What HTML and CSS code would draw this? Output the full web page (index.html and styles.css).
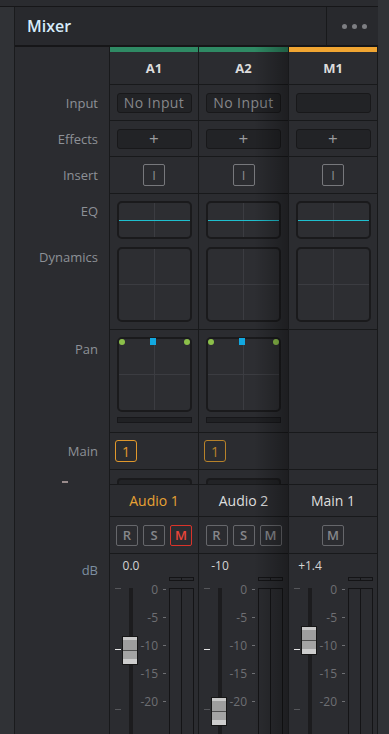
FILE: index.html
```html
<!DOCTYPE html>
<html>
<head>
  <title>Mixer</title>
  <link rel="stylesheet" href="styles.css">
</head>
<body>
  <div class="app">
    <div class="workspace">
      <div class="topbar"></div>
      <div class="workspace-body">
        <div class="sidebar"></div>
        <div class="mixer">
          <div class="mixer-head">
            <div class="mixer-title">Mixer</div>
            <div class="mixer-menu"><span></span><span></span><span></span></div>
          </div>
          <div class="mixer-body">

            <div class="labels">
              <div class="row row-bar"></div>
              <div class="row row-head"></div>
              <div class="row row-input">Input</div>
              <div class="row row-fx">Effects</div>
              <div class="row row-insert">Insert</div>
              <div class="row row-eq">
                <span class="label-eq">EQ</span>
                <span class="label-dyn">Dynamics</span>
              </div>
              <div class="row row-pan"><span class="label-pan">Pan</span></div>
              <div class="row row-main">Main</div>
              <div class="row row-stub"><span class="stub-mark"></span></div>
              <div class="row row-name"></div>
              <div class="row row-rsm"></div>
              <div class="row row-fader"><span class="label-db">dB</span></div>
            </div>

            <div class="channel">
              <div class="row row-bar bar-green"></div>
              <div class="row row-head">A1</div>
              <div class="row row-input"><div class="slot">No Input</div></div>
              <div class="row row-fx"><div class="slot plus">+</div></div>
              <div class="row row-insert"><div class="btn-insert">I</div></div>
              <div class="row row-eq">
                <div class="graph eq"></div>
                <div class="graph dyn"></div>
              </div>
              <div class="row row-pan">
                <div class="graph pan">
                  <span class="pan-dot left"></span>
                  <span class="pan-pos"></span>
                  <span class="pan-dot right"></span>
                </div>
                <div class="pan-bar"></div>
              </div>
              <div class="row row-main"><div class="bus-btn">1</div></div>
              <div class="row row-stub"><div class="stub"></div></div>
              <div class="row row-name name-active">Audio 1</div>
              <div class="row row-rsm">
                <div class="tog">R</div><div class="tog">S</div><div class="tog mute-on">M</div>
              </div>
              <div class="row row-fader">
                <div class="fader-value">0.0</div>
                <div class="fader-body">
                  <div class="fader">
                    <div class="ticks"><span></span><span class="unity"></span><span></span></div>
                    <div class="track"></div>
                    <div class="knob" style="top: 59px"></div>
                  </div>
                  <div class="scale"><span>0</span><span>-5</span><span>-10</span><span>-15</span><span>-20</span></div>
                  <div class="meter">
                    <div class="peak"><span></span><span></span></div>
                    <div class="meter-bars"><span></span><span></span></div>
                  </div>
                </div>
              </div>
            </div>

            <div class="channel wide shaded">
              <div class="row row-bar bar-green"></div>
              <div class="row row-head">A2</div>
              <div class="row row-input"><div class="slot">No Input</div></div>
              <div class="row row-fx"><div class="slot plus">+</div></div>
              <div class="row row-insert"><div class="btn-insert">I</div></div>
              <div class="row row-eq">
                <div class="graph eq"></div>
                <div class="graph dyn"></div>
              </div>
              <div class="row row-pan">
                <div class="graph pan">
                  <span class="pan-dot left"></span>
                  <span class="pan-pos"></span>
                  <span class="pan-dot right"></span>
                </div>
                <div class="pan-bar"></div>
              </div>
              <div class="row row-main"><div class="bus-btn dim">1</div></div>
              <div class="row row-stub"><div class="stub"></div></div>
              <div class="row row-name">Audio 2</div>
              <div class="row row-rsm">
                <div class="tog">R</div><div class="tog">S</div><div class="tog">M</div>
              </div>
              <div class="row row-fader">
                <div class="fader-value">-10</div>
                <div class="fader-body">
                  <div class="fader">
                    <div class="ticks"><span></span><span class="unity"></span><span></span></div>
                    <div class="track"></div>
                    <div class="knob" style="top: 120px"></div>
                  </div>
                  <div class="scale"><span>0</span><span>-5</span><span>-10</span><span>-15</span><span>-20</span></div>
                  <div class="meter">
                    <div class="peak"><span></span><span></span></div>
                    <div class="meter-bars"><span></span><span></span></div>
                  </div>
                </div>
              </div>
            </div>

            <div class="channel">
              <div class="row row-bar bar-orange"></div>
              <div class="row row-head">M1</div>
              <div class="row row-input"><div class="slot"></div></div>
              <div class="row row-fx"><div class="slot plus">+</div></div>
              <div class="row row-insert"><div class="btn-insert">I</div></div>
              <div class="row row-eq">
                <div class="graph eq"></div>
                <div class="graph dyn"></div>
              </div>
              <div class="row row-pan"></div>
              <div class="row row-main"></div>
              <div class="row row-stub"></div>
              <div class="row row-name">Main 1</div>
              <div class="row row-rsm">
                <div class="tog">M</div>
              </div>
              <div class="row row-fader">
                <div class="fader-value">+1.4</div>
                <div class="fader-body">
                  <div class="fader">
                    <div class="ticks"><span></span><span class="unity"></span><span></span></div>
                    <div class="track"></div>
                    <div class="knob" style="top: 49px"></div>
                  </div>
                  <div class="scale"><span>0</span><span>-5</span><span>-10</span><span>-15</span><span>-20</span></div>
                  <div class="meter">
                    <div class="peak"><span></span><span></span></div>
                    <div class="meter-bars"><span></span><span></span></div>
                  </div>
                </div>
              </div>
            </div>

          </div>
        </div>
      </div>
    </div>
    <div class="rightbar"></div>
  </div>
</body>
</html>
```

FILE: styles.css
```css
* {
  box-sizing: border-box;
}

body {
  margin: 0;
  background-color: #303236;
  font-family: "Open Sans", "DejaVu Sans", sans-serif;
  height: 734px;
  overflow: hidden;
}

.app {
  display: flex;
  height: 734px;
}

.workspace {
  width: 378px;
  display: flex;
  flex-direction: column;
}

.topbar {
  height: 7px;
  background-color: #2a2b2f;
  border-bottom: 1px solid #161618;
}

.workspace-body {
  flex: 1;
  display: flex;
  min-height: 0;
}

.sidebar {
  width: 15px;
  background-color: #303236;
  border-right: 1px solid #1a1b1d;
}

.rightbar {
  flex: 1;
  background-color: #303236;
}

.mixer {
  flex: 1;
  display: flex;
  flex-direction: column;
  background-color: #2b2c30;
}

.mixer-head {
  height: 40px;
  display: flex;
  background-color: #28292d;
  border-bottom: 2px solid #161618;
}

.mixer-title {
  flex: 1;
  display: flex;
  align-items: center;
  padding-left: 12px;
  font-size: 16px;
  font-weight: 600;
  color: #d6ecfb;
}

.mixer-menu {
  width: 52px;
  display: flex;
  align-items: center;
  justify-content: center;
  gap: 5px;
  padding-left: 3px;
  border-left: 1px solid #18191b;
}

.mixer-menu span {
  width: 5px;
  height: 5px;
  border-radius: 50%;
  background-color: #7d7e82;
}

.mixer-body {
  flex: 1;
  display: flex;
  min-height: 0;
}

/* rows shared by label column and channels */
.row {
  border-bottom: 1px solid #18191b;
  display: flex;
  align-items: center;
  justify-content: center;
}

.row-bar { height: 5px; border-bottom: 0; }
.row-head { height: 33px; }
.row-input { height: 36px; }
.row-fx { height: 36px; }
.row-insert { height: 37px; }
.row-eq { height: 136px; }
.row-pan { height: 103px; }
.row-main { height: 37px; }
.row-stub { height: 15px; }
.row-name { height: 32px; }
.row-rsm { height: 37px; }
.row-fader {
  flex: 1;
  border-bottom: 0;
  display: block;
  overflow: hidden;
}

/* label column */
.labels {
  width: 95px;
  display: flex;
  flex-direction: column;
  border-right: 1px solid #18191b;
}

.labels .row {
  border-bottom-color: transparent;
  justify-content: flex-end;
  padding-right: 11px;
  font-size: 13px;
  color: #8d9197;
}

.labels .row-eq,
.labels .row-pan {
  flex-direction: column;
  align-items: flex-end;
  justify-content: flex-start;
}

.label-eq {
  margin-top: 8px;
  line-height: 18px;
}

.label-dyn {
  margin-top: 28px;
  line-height: 18px;
}

.label-pan {
  margin-top: 10px;
  line-height: 18px;
}

.labels .row-stub {
  align-items: flex-end;
  justify-content: flex-start;
  padding-left: 47px;
}

.stub-mark {
  width: 6px;
  height: 2px;
  margin-bottom: 1px;
  background-color: #9a8c8c;
}

.labels .row-fader {
  display: flex;
  align-items: flex-start;
  padding-top: 7px;
  color: #7d8fa0;
}

.label-db {
  line-height: 18px;
}

/* channel strips */
.channel {
  width: 89px;
  display: flex;
  flex-direction: column;
  position: relative;
  border-right: 1px solid #18191b;
}

.channel.wide {
  width: 90px;
}

.channel.shaded:after {
  content: "";
  position: absolute;
  top: 0;
  left: 0;
  right: 0;
  bottom: 0;
  background: linear-gradient(to right, rgba(0, 0, 0, 0) 62%, rgba(0, 0, 0, 0.32) 100%);
  pointer-events: none;
}

.bar-green { background-color: #2f8a64; }
.bar-orange { background-color: #f0a532; }

.channel .row-head {
  font-size: 13px;
  font-weight: 700;
  color: #dcdcdc;
}

.slot {
  width: 75px;
  height: 20px;
  display: flex;
  align-items: center;
  justify-content: center;
  background-color: #222326;
  border: 1px solid #18181a;
  border-radius: 3px;
  font-size: 14px;
  letter-spacing: 0.4px;
  color: #86878a;
}

.slot.plus {
  font-size: 17px;
  color: #9a9b9e;
}

.btn-insert {
  width: 22px;
  height: 22px;
  display: flex;
  align-items: center;
  justify-content: center;
  border: 1px solid #77787c;
  border-radius: 2px;
  font-size: 13px;
  color: #8a8b8f;
}

.channel .row-eq,
.channel .row-pan {
  flex-direction: column;
  justify-content: flex-start;
  padding-top: 7px;
}

.channel .row-eq {
  gap: 8px;
}

.channel .row-pan {
  gap: 5px;
}

.graph {
  width: 75px;
  position: relative;
  border: 2px solid #1a1a1c;
  border-radius: 5px;
  background:
    linear-gradient(#3b3c41, #3b3c41) center / 1px 100% no-repeat,
    linear-gradient(#3b3c41, #3b3c41) center / 100% 1px no-repeat,
    #2d2e32;
}

.graph.eq {
  height: 38px;
  background:
    linear-gradient(#1fc0cf, #1fc0cf) center / 100% 1px no-repeat,
    linear-gradient(#3b3c41, #3b3c41) center / 1px 100% no-repeat,
    #2d2e32;
}

.graph.dyn,
.graph.pan {
  height: 75px;
}

.pan-dot {
  position: absolute;
  top: 0;
  width: 6px;
  height: 6px;
  border-radius: 50%;
  background-color: #8cc04a;
}

.pan-dot.left { left: 0; }
.pan-dot.right { right: 0; }

.pan-pos {
  position: absolute;
  top: -1px;
  left: 31px;
  width: 6px;
  height: 7px;
  background-color: #12a8e0;
}

.pan-bar {
  width: 75px;
  height: 6px;
  background-color: #202124;
  border: 1px solid #17171a;
}

.channel .row-main {
  justify-content: flex-start;
  padding-left: 5px;
}

.bus-btn {
  width: 22px;
  height: 22px;
  display: flex;
  align-items: center;
  justify-content: center;
  border: 1px solid #e0982c;
  border-radius: 3px;
  font-size: 14px;
  color: #e0982c;
}

.bus-btn.dim {
  border-color: #b7822a;
  color: #b7822a;
}

.channel .row-stub {
  align-items: flex-start;
  padding-top: 8px;
  overflow: hidden;
}

.stub {
  width: 75px;
  height: 12px;
  flex-shrink: 0;
  background-color: #222326;
  border: 2px solid #1a1a1c;
  border-radius: 4px;
}

.channel .row-name {
  font-size: 14px;
  color: #dedede;
}

.channel .row-name.name-active {
  color: #e8a234;
}

.channel .row-rsm {
  gap: 5px;
}

.tog {
  width: 22px;
  height: 21px;
  display: flex;
  align-items: center;
  justify-content: center;
  border: 1.5px solid #66676b;
  border-radius: 2px;
  font-size: 13px;
  font-weight: 600;
  color: #86878b;
}

.tog.mute-on {
  border-color: #d9342b;
  color: #e8453a;
}

/* fader section */
.fader-value {
  width: 42px;
  height: 23px;
  padding-top: 4px;
  line-height: 16px;
  text-align: center;
  font-size: 12px;
  color: #d4d4d4;
}

.fader-body {
  display: flex;
  height: 160px;
}

.fader {
  width: 28px;
  display: flex;
  position: relative;
  padding-left: 5px;
}

.ticks {
  width: 6px;
  margin-right: 8px;
  display: flex;
  flex-direction: column;
}

.ticks span {
  height: 1px;
  margin-top: 59px;
  background-color: #55565a;
}

.ticks span:first-child {
  margin-top: 11px;
}

.ticks span.unity {
  margin-top: 60px;
  background-color: #e6e6e6;
}

.track {
  width: 4px;
  margin-top: 11px;
  background-color: #1c1c1e;
}

.knob {
  position: absolute;
  left: 12px;
  width: 16px;
  height: 29px;
  border: 1px solid #161616;
  background: linear-gradient(#c9c9c9 0, #c9c9c9 3px, #9e9e9e 3px, #9e9e9e 13px, #4e4e4e 13px, #4e4e4e 14px, #a4a4a4 14px, #a4a4a4 22px, #cdcdcd 22px);
}

.scale {
  width: 29px;
  padding-top: 5px;
  padding-right: 1px;
  display: flex;
  flex-direction: column;
  gap: 14px;
}

.scale span {
  display: flex;
  align-items: center;
  justify-content: flex-end;
  height: 14px;
  font-size: 12px;
  color: #6e6f73;
}

.scale span:after {
  content: "";
  width: 3px;
  height: 1px;
  margin-left: 5px;
  background-color: #6e6f73;
}

.meter {
  width: 25px;
  margin-left: 2px;
  display: flex;
  flex-direction: column;
}

.peak,
.meter-bars {
  display: flex;
  border: 1px solid #141416;
}

.peak {
  height: 4px;
}

.meter-bars {
  flex: 1;
  margin-top: 7px;
  border-bottom: 0;
}

.peak span,
.meter-bars span {
  flex: 1;
}

.peak span:first-child,
.meter-bars span:first-child {
  border-right: 1px solid #141416;
}
```
